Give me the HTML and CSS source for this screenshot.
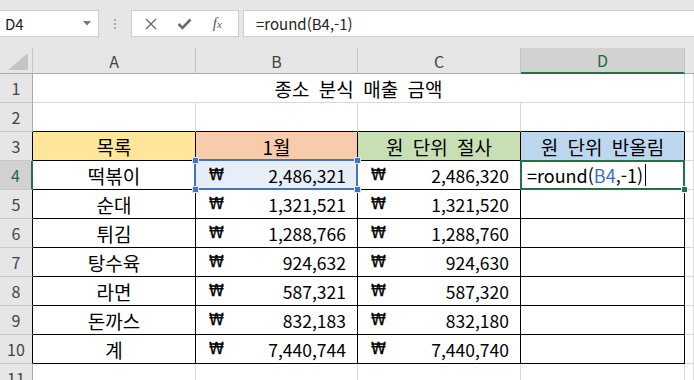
FILE: index.html
```html
<html lang="ko">
<head>
    <meta charset="UTF-8">
    <title>종소 분식 매출 금액</title>
    <link rel="stylesheet" href="styles.css">
</head>
<body>
    <div class="toolbar">
        <div class="namebox">
            <span>D4</span>
            <svg class="drop" width="8" height="5" viewBox="0 0 8 5"><path d="M0 0 L8 0 L4 4.5 Z" fill="#777"/></svg>
        </div>
        <div class="grip"><i></i><i></i><i></i></div>
        <div class="buttons">
            <svg width="12" height="12" viewBox="0 0 12 12"><path d="M1 1 L11 11 M11 1 L1 11" stroke="#6b6b6b" stroke-width="1.4" fill="none"/></svg>
            <svg width="15" height="12" viewBox="0 0 15 12"><path d="M1.5 6 L5.5 10 L13.5 1.5" stroke="#6b6b6b" stroke-width="2.6" fill="none"/></svg>
            <span class="fx">f<sub>x</sub></span>
        </div>
        <div class="formula">=round(B4,-1)</div>
    </div>

    <div class="sheet">
        <div class="ch corner"><svg width="20" height="17" viewBox="0 0 20 17"><path d="M20 0 L20 17 L0 17 Z" fill="#c4c4c4"/></svg></div>
        <div class="ch">A</div>
        <div class="ch">B</div>
        <div class="ch">C</div>
        <div class="ch sel">D</div>
        <div class="ch last"></div>

        <div class="rh">1</div>
        <div class="c title">종소 분식 매출 금액</div>
        <div class="c"></div>

        <div class="rh">2</div>
        <div class="c above"></div>
        <div class="c above"></div>
        <div class="c above"></div>
        <div class="c above"></div>
        <div class="c"></div>

        <div class="rh edge">3</div>
        <div class="c box head yellow">목록</div>
        <div class="c box head orange">1월</div>
        <div class="c box head green">원 단위 절사</div>
        <div class="c box head blue">원 단위 반올림</div>
        <div class="c"></div>

        <div class="rh sel">4</div>
        <div class="c box name">떡볶이</div>
        <div class="c box money ref">
            <span class="won">₩</span><span class="num">2,486,321</span>
            <i class="h tl"></i><i class="h tr"></i><i class="h bl"></i><i class="h br"></i>
        </div>
        <div class="c box money"><span class="won">₩</span><span class="num">2,486,320</span></div>
        <div class="c box active">=round(<span class="refc">B4</span>,-1)<i class="caret"></i><i class="fill"></i></div>
        <div class="c"></div>

        <div class="rh edge">5</div>
        <div class="c box name">순대</div>
        <div class="c box money"><span class="won">₩</span><span class="num">1,321,521</span></div>
        <div class="c box money"><span class="won">₩</span><span class="num">1,321,520</span></div>
        <div class="c box"></div>
        <div class="c"></div>

        <div class="rh edge">6</div>
        <div class="c box name">튀김</div>
        <div class="c box money"><span class="won">₩</span><span class="num">1,288,766</span></div>
        <div class="c box money"><span class="won">₩</span><span class="num">1,288,760</span></div>
        <div class="c box"></div>
        <div class="c"></div>

        <div class="rh edge">7</div>
        <div class="c box name">탕수육</div>
        <div class="c box money"><span class="won">₩</span><span class="num">924,632</span></div>
        <div class="c box money"><span class="won">₩</span><span class="num">924,630</span></div>
        <div class="c box"></div>
        <div class="c"></div>

        <div class="rh edge">8</div>
        <div class="c box name">라면</div>
        <div class="c box money"><span class="won">₩</span><span class="num">587,321</span></div>
        <div class="c box money"><span class="won">₩</span><span class="num">587,320</span></div>
        <div class="c box"></div>
        <div class="c"></div>

        <div class="rh edge">9</div>
        <div class="c box name">돈까스</div>
        <div class="c box money"><span class="won">₩</span><span class="num">832,183</span></div>
        <div class="c box money"><span class="won">₩</span><span class="num">832,180</span></div>
        <div class="c box"></div>
        <div class="c"></div>

        <div class="rh edge">10</div>
        <div class="c box name">계</div>
        <div class="c box money"><span class="won">₩</span><span class="num">7,440,744</span></div>
        <div class="c box money"><span class="won">₩</span><span class="num">7,440,740</span></div>
        <div class="c box"></div>
        <div class="c"></div>

        <div class="rh">11</div>
        <div class="c"></div>
        <div class="c"></div>
        <div class="c"></div>
        <div class="c"></div>
        <div class="c"></div>
    </div>
</body>
</html>
```

FILE: styles.css
```css
body {
    margin: 0;
    width: 694px;
    height: 380px;
    overflow: hidden;
    background: #fff;
    font-family: "Noto Sans CJK KR", "Noto Sans", sans-serif;
    color: #000;
}

/* formula bar */
.toolbar {
    height: 48px;
    box-sizing: border-box;
    padding-top: 10px;
    background: #e6e6e6;
    display: flex;
    align-items: flex-start;
    overflow: hidden;
}

.namebox {
    width: 99px;
    height: 27px;
    box-sizing: border-box;
    background: #fff;
    border: 1px solid #cfcfcf;
    border-left: none;
    display: flex;
    align-items: center;
    justify-content: space-between;
    padding: 0 7px 0 5px;
    font-size: 15px;
    color: #222;
}

.grip {
    width: 32px;
    height: 27px;
    display: flex;
    flex-direction: column;
    align-items: center;
    justify-content: center;
    gap: 2px;
}

.grip i {
    width: 2px;
    height: 2px;
    background: #a8a8a8;
}

.buttons {
    width: 108px;
    height: 27px;
    box-sizing: border-box;
    background: #fff;
    border: 1px solid #cfcfcf;
    display: flex;
    align-items: center;
    justify-content: space-around;
    padding: 0 6px 0 3px;
}

.fx {
    font-family: "Liberation Serif", serif;
    font-style: italic;
    font-size: 15px;
    color: #555;
    line-height: 1;
}

.fx sub {
    font-size: 11px;
    vertical-align: 0;
}

.formula {
    flex: 1;
    height: 27px;
    box-sizing: border-box;
    margin-left: 4px;
    margin-right: -4px;
    background: #fff;
    border: 1px solid #cfcfcf;
    padding-left: 12px;
    font-size: 15px;
    line-height: 25px;
    color: #222;
}

/* grid */
.sheet {
    display: grid;
    grid-template-columns: 33px 163px 162px 163px 164px 1fr;
    grid-template-rows: 26px repeat(11, 29px);
}

.sheet > div {
    box-sizing: border-box;
}

.ch {
    background: #e6e6e6;
    border-right: 1px solid #c3c3c3;
    border-bottom: 1px solid #ababab;
    font-size: 16px;
    color: #444;
    display: flex;
    align-items: center;
    justify-content: center;
}

.ch.corner {
    align-items: flex-end;
    justify-content: flex-end;
    padding: 0 4px 3px 0;
}

.ch.sel {
    background: #d2d2d2;
    color: #1d6b40;
    border-bottom: 2px solid #217346;
}

.ch.last {
    border-right: none;
}

.rh {
    background: #e6e6e6;
    border-right: 1px solid #ababab;
    border-bottom: 1px solid #c8c8c8;
    font-size: 16px;
    color: #444;
    display: flex;
    align-items: center;
    justify-content: center;
}

.rh.edge {
    border-right-color: #000;
}

.rh.sel {
    background: #d2d2d2;
    color: #1d6b40;
    border-right: 2px solid #217346;
}

.c {
    border-right: 1px solid #d9d9d9;
    border-bottom: 1px solid #d9d9d9;
    font-size: 19px;
    white-space: nowrap;
    display: flex;
    align-items: center;
}

.title {
    grid-column: span 4;
    justify-content: center;
    word-spacing: 4px;
}

.above {
    border-bottom-color: #000;
}

.box {
    border-right-color: #000;
    border-bottom-color: #000;
}

.head,
.name {
    justify-content: center;
    word-spacing: 4px;
}

.yellow { background: #ffe699; }
.orange { background: #f8cbad; }
.green  { background: #c6e0b4; }
.blue   { background: #bdd7ee; }

.money {
    justify-content: space-between;
    padding: 0 11px 0 13px;
}

.num {
    font-size: 17.5px;
}

.won {
    font-family: "DejaVu Sans", sans-serif;
    font-size: 15px;
    -webkit-text-stroke: 0.3px #000;
}

/* reference highlight on B4 */
.ref {
    position: relative;
    background: #e8eef8;
}

.ref::before {
    content: "";
    position: absolute;
    left: -2px;
    top: -2px;
    right: -1px;
    bottom: -1px;
    border: 2px solid #4472c4;
}

.h {
    position: absolute;
    width: 5px;
    height: 5px;
    background: #4472c4;
    border: 1px solid #dfe7f5;
    z-index: 2;
}

.h.tl { left: -4px; top: -4px; }
.h.tr { right: -4px; top: -4px; }
.h.bl { left: -4px; bottom: -4px; }
.h.br { right: -4px; bottom: -4px; }

/* active cell D4 */
.active {
    position: relative;
    padding-left: 6px;
    font-size: 18px;
}

.active::before {
    content: "";
    position: absolute;
    left: -1px;
    top: -1px;
    right: -1px;
    bottom: -1px;
    border: 2px solid #217346;
}

.refc {
    color: #3b6fc4;
}

.caret {
    display: inline-block;
    width: 1px;
    height: 22px;
    margin-left: 2px;
    background: #000;
}

.fill {
    position: absolute;
    right: -4px;
    bottom: -4px;
    width: 5px;
    height: 5px;
    background: #217346;
    border: 1px solid #fff;
    z-index: 2;
}
```
